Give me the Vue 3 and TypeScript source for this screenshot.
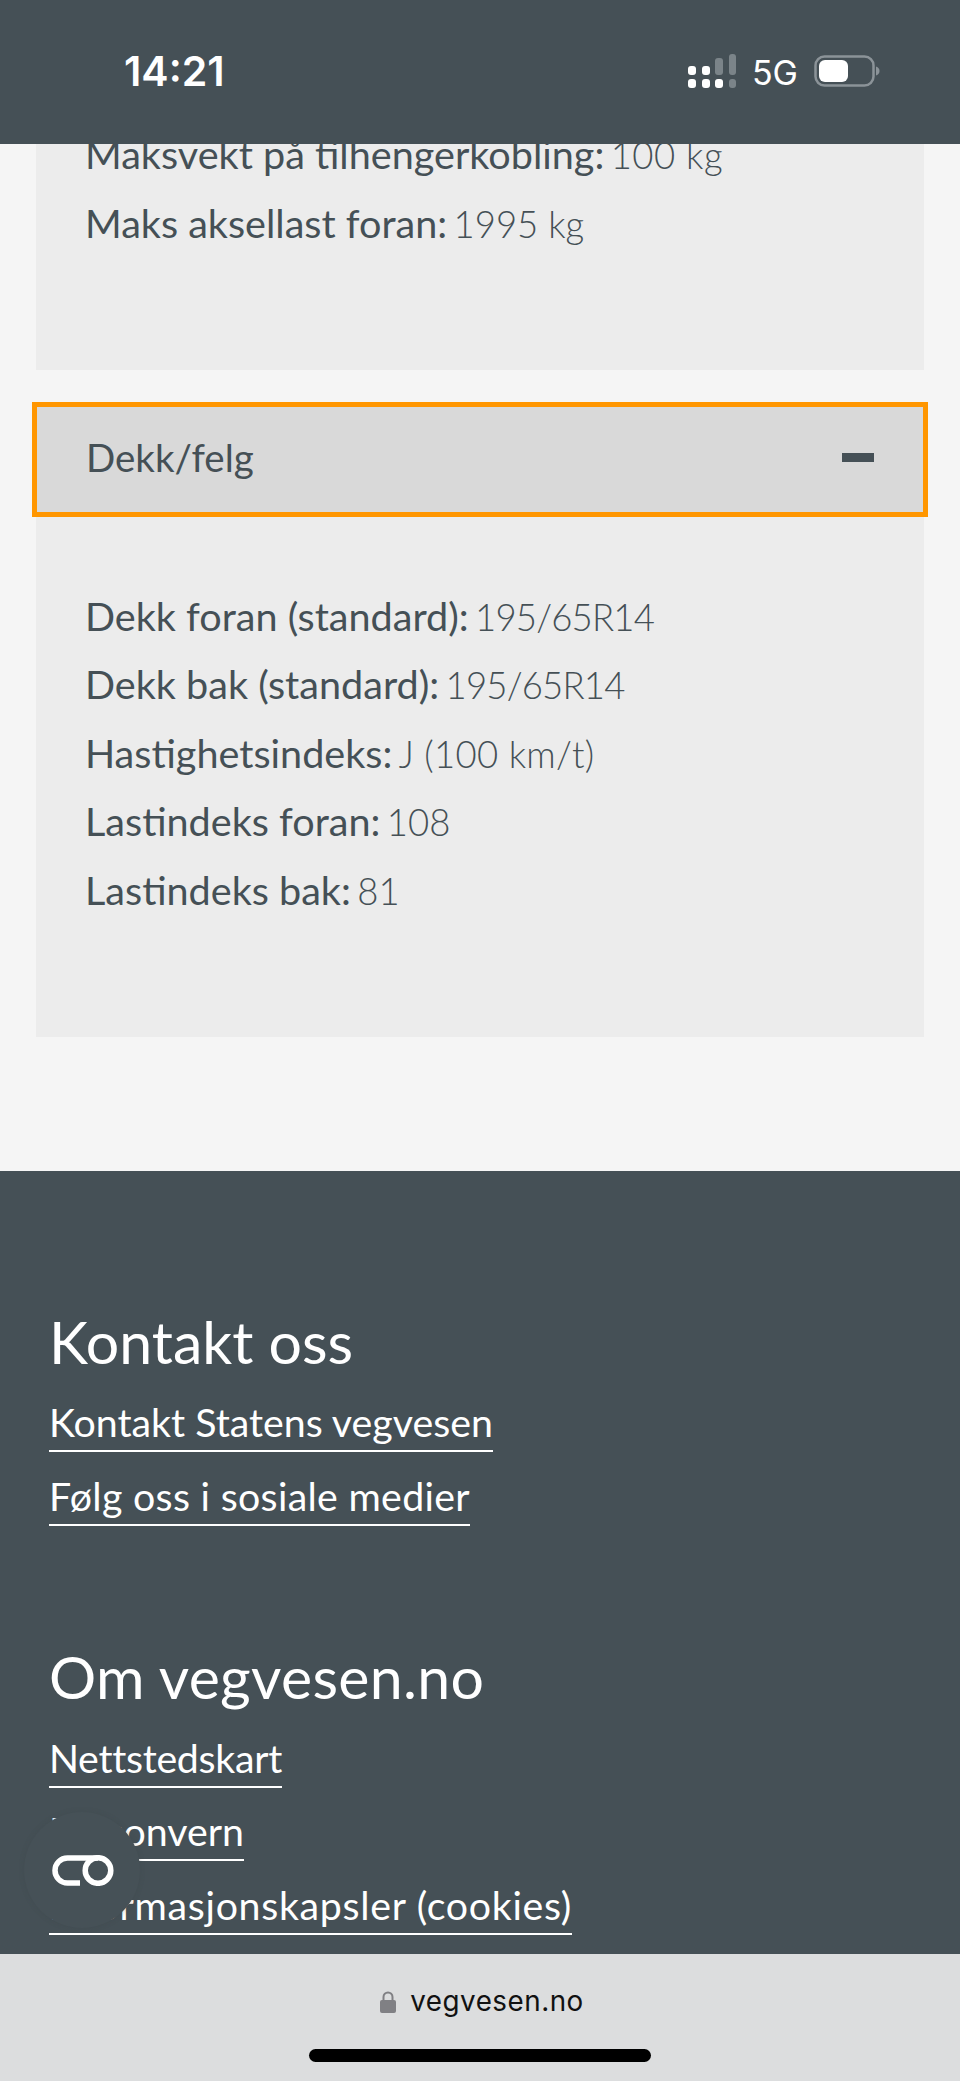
<script setup lang="ts">
interface Spec { label: string; value: string; ls?: number }
interface Link { text: string; ls?: number }
const topSpecs: Spec[] = [
  { label: 'Maksvekt på tilhengerkobling:', value: '100 kg', ls: 0.5 },
  { label: 'Maks aksellast foran:', value: '1995 kg' },
]
const tyreSpecs: Spec[] = [
  { label: 'Dekk foran (standard):', value: '195/65R14', ls: -0.8 },
  { label: 'Dekk bak (standard):', value: '195/65R14', ls: -0.8 },
  { label: 'Hastighetsindeks:', value: 'J (100 km/t)', ls: 0.3 },
  { label: 'Lastindeks foran:', value: '108' },
  { label: 'Lastindeks bak:', value: '81' },
]
const footer: { title: string; ls?: number; links: Link[] }[] = [
  {
    title: 'Kontakt oss',
    links: [{ text: 'Kontakt Statens vegvesen' }, { text: 'Følg oss i sosiale medier', ls: 0.3 }],
  },
  {
    title: 'Om vegvesen.no',
    ls: 0.3,
    links: [
      { text: 'Nettstedskart', ls: -0.3 },
      { text: 'Personvern' },
      { text: 'Informasjonskapsler (cookies)', ls: 0.7 },
    ],
  },
]
const spacing = (ls?: number) => (ls ? { letterSpacing: `${ls}px` } : undefined)
</script>

<template>
  <div class="phone">
    <header class="status">
      <span class="time">14:21</span>
      <div class="status-right">
        <svg class="signal" width="48" height="34" viewBox="0 0 48 34">
          <rect x="0" y="12" width="8" height="9" rx="3" fill="#fff" />
          <rect x="14" y="12" width="8" height="9" rx="3" fill="#fff" />
          <rect x="27" y="4" width="8" height="17" rx="3" fill="#7b8489" />
          <rect x="41" y="0" width="7" height="21" rx="3" fill="#7b8489" />
          <rect x="0" y="25" width="8" height="9" rx="3" fill="#fff" />
          <rect x="14" y="25" width="8" height="9" rx="3" fill="#fff" />
          <rect x="27" y="25" width="8" height="9" rx="3" fill="#fff" />
          <rect x="41" y="25" width="7" height="9" rx="3" fill="#7b8489" />
        </svg>
        <span class="net">5G</span>
        <svg class="battery" width="66" height="32" viewBox="0 0 66 32">
          <rect x="1.5" y="1.5" width="58" height="29" rx="9" fill="none" stroke="#8b9398" stroke-width="2.5" />
          <rect x="5" y="5" width="29" height="22" rx="6" fill="#fff" />
          <path d="M62 11.5c2.400.8 3.500 2.500 3.500 4.500s-1.100 3.700-3.500 4.500z" fill="#8b9398" />
        </svg>
      </div>
    </header>

    <main class="page">
      <div class="scroller">
        <section class="panel first">
          <p v-for="s in topSpecs" :key="s.label" class="spec"><span class="label">{{ s.label }}</span> <span class="value" :style="spacing(s.ls)">{{ s.value }}</span></p>
        </section>

        <button class="acc-head" type="button">
          <span>Dekk/felg</span>
          <span class="minus"></span>
        </button>
        <section class="panel second">
          <p v-for="s in tyreSpecs" :key="s.label" class="spec"><span class="label">{{ s.label }}</span> <span class="value" :style="spacing(s.ls)">{{ s.value }}</span></p>
        </section>

        <footer class="foot">
          <div v-for="col in footer" :key="col.title" class="foot-col">
            <h2 :style="spacing(col.ls)">{{ col.title }}</h2>
            <ul>
              <li v-for="l in col.links" :key="l.text"><a href="#" :style="spacing(l.ls)">{{ l.text }}</a></li>
            </ul>
          </div>
        </footer>
      </div>

      <div class="cookie">
        <svg width="62" height="31" viewBox="0 0 62 31" fill="none" stroke="#fff" stroke-width="5.500">
          <path d="M28 28H15.500a12.500 12.500 0 0 1 0-25H46" />
          <circle cx="46" cy="15.500" r="12.800" />
        </svg>
      </div>
    </main>

    <div class="urlbar">
      <div class="url">
        <svg width="16" height="22" viewBox="0 0 16 22">
          <path d="M3.500 10V6a4.500 4.500 0 0 1 9 0v4" fill="none" stroke="#808084" stroke-width="2" />
          <rect x="0" y="9" width="16" height="13" rx="2" fill="#808084" />
        </svg>
        <span>vegvesen.no</span>
      </div>
      <div class="home"></div>
    </div>
  </div>
</template>

<style>
html, body { margin: 0; padding: 0; background: #f5f5f5; }
</style>

<style scoped>
.phone {
  width: 960px;
  height: 2081px;
  display: flex;
  flex-direction: column;
  overflow: hidden;
  font-family: Lato, "Open Sans", sans-serif;
  color: #455056;
}
.status {
  height: 144px;
  flex: none;
  background: #455056;
  color: #fff;
  display: flex;
  align-items: center;
  justify-content: space-between;
  padding: 0 80px 0 124px;
  box-sizing: border-box;
  position: relative;
  z-index: 2;
}
.time {
  font: 600 41px/1 Inter, "Liberation Sans", sans-serif;
  margin-top: -2px;
}
.status-right {
  display: flex;
  align-items: center;
  margin-top: -2px;
}
.net {
  font: 400 34px/1 Inter, "Liberation Sans", sans-serif;
  margin: 3px 16px 0 16px;
}
.signal { display: block; }
.battery { display: block; }
.page {
  flex: 1;
  min-height: 0;
  position: relative;
  overflow: hidden;
  background: #f5f5f5;
}
.scroller {
  margin-top: -24px;
  padding: 0 36px;
}
.panel {
  background: #ececec;
  padding: 0 50px;
}
.panel.first { padding-bottom: 112.5px; }
.panel.second { padding-top: 65px; padding-bottom: 112px; }
.spec {
  margin: 0;
  height: 68.6px;
  line-height: 68.6px;
  font-size: 36.5px;
  white-space: nowrap;
}
.label { font-weight: 400; font-size: 39.6px; margin-left: -1px; }
.value { font-weight: 300; font-size: 36.5px; margin-left: -3px; }
.acc-head {
  display: flex;
  align-items: center;
  justify-content: space-between;
  box-sizing: border-box;
  width: 896px;
  height: 115px;
  margin: 32px -4px 0;
  padding: 0 49px 3px 49px;
  background: #d9d9d9;
  border: 5px solid #ff9600;
  font: 400 38.5px/1 Lato, "Open Sans", sans-serif;
  color: #455056;
  text-align: left;
}
.minus {
  width: 32px;
  height: 9px;
  background: #455056;
  display: block;
}
.foot {
  background: #455056;
  color: #fff;
  margin: 134px -36px 0;
  padding: 137px 49px 0;
  height: 800px;
}
.foot-col { margin-bottom: 102px; }
.foot h2 {
  margin: 0;
  font-weight: 400;
  font-size: 59px;
  line-height: 68px;
}
.foot ul {
  list-style: none;
  margin: 18.5px 0 0;
  padding: 0;
}
.foot li { height: 73.5px; }
.foot a {
  color: #fff;
  text-decoration: none;
  font-size: 39.3px;
  line-height: 56px;
  display: inline-block;
  border-bottom: 2.500px solid #fff;
}
.cookie {
  position: absolute;
  left: 24px;
  top: 1668px;
  width: 116px;
  height: 116px;
  padding-left: 2px;
  box-sizing: border-box;
  border-radius: 50%;
  background: #465157;
  box-shadow: 0 0 5px rgba(60, 68, 74, 0.3);
  display: flex;
  align-items: center;
  justify-content: center;
}
.urlbar {
  height: 127px;
  flex: none;
  background: #dcddde;
  position: relative;
  z-index: 2;
  display: flex;
  flex-direction: column;
  align-items: center;
}
.url {
  display: flex;
  align-items: center;
  gap: 14px;
  margin-top: 34px;
  margin-left: 4px;
  color: #111;
  font: 400 27.8px/1 Inter, "Liberation Sans", sans-serif;
  letter-spacing: 0.500px;
}
.home {
  position: absolute;
  left: 309px;
  bottom: 19px;
  width: 342px;
  height: 13px;
  border-radius: 7px;
  background: #000;
}
</style>
